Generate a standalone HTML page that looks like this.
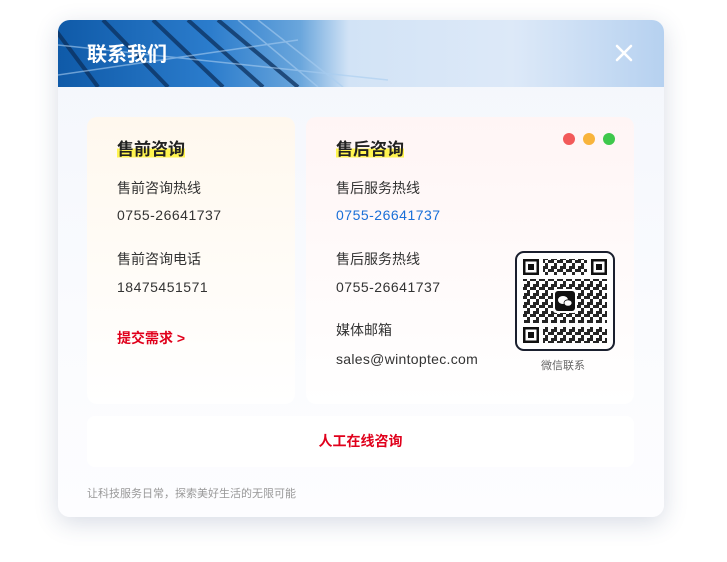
<!DOCTYPE html><html><head><meta charset="utf-8"><style>
*{margin:0;padding:0;box-sizing:border-box}
body{width:727px;height:562px;background:#fff;font-family:"Liberation Sans","Noto Sans CJK SC",sans-serif;position:relative;overflow:hidden}
.dlg{position:absolute;left:58px;top:20px;width:606px;height:497px;border-radius:12px;background:linear-gradient(180deg,#f3f6fc,#fafbfe 60%,#fdfdff);box-shadow:0 6px 24px rgba(40,60,110,.18);overflow:hidden}
.hd{position:absolute;left:0;top:0;width:606px;height:67px;background:linear-gradient(90deg,#0f5aa8 0%,#2b7ccc 25%,#6aa6dc 40%,#d2e3f6 48%,#dde9f8 75%,#b6d1f0 100%);overflow:hidden}
.hd h1{position:absolute;left:29px;top:18px;color:#fff;font-size:20px;font-weight:bold}
.x{position:absolute;left:555px;top:22px;width:22px;height:22px}
.card{position:absolute;top:97px;height:287px;border-radius:10px}
.l{left:29px;width:208px;background:linear-gradient(180deg,#fff8ee,#fff)}
.r{left:248px;width:328px;background:linear-gradient(180deg,#fff5f5,#fff)}
.t{position:absolute;font-size:17px;font-weight:bold;color:#222;background:linear-gradient(180deg,transparent 55%,#fff44f 55%,#fff44f 90%,transparent 90%)}
.s{position:absolute;font-size:14px;color:#333}
.n{letter-spacing:.5px}
.dot{position:absolute;top:16px;width:12px;height:12px;border-radius:50%}
.btn{position:absolute;left:29px;top:396px;width:547px;height:51px;border-radius:8px;background:#fff;color:#e0001b;font-weight:bold;font-size:14px;text-align:center;line-height:51px}
.ft{position:absolute;left:29px;top:465px;font-size:11px;color:#999}
</style></head><body>
<div class="dlg">
<div class="hd">
<svg width="330" height="67" style="position:absolute;left:0;top:0">
<g stroke="#0b2f5c" stroke-width="4" opacity=".75"><line x1="-10" y1="0" x2="40" y2="67"/><line x1="45" y1="0" x2="110" y2="67"/><line x1="95" y1="0" x2="165" y2="67"/><line x1="130" y1="0" x2="205" y2="67"/><line x1="160" y1="0" x2="240" y2="67"/></g>
<g stroke="#a9cdf0" stroke-width="1.5" opacity=".6"><line x1="0" y1="25" x2="330" y2="60"/><line x1="0" y1="55" x2="240" y2="20"/><line x1="180" y1="0" x2="260" y2="67"/><line x1="200" y1="0" x2="285" y2="67"/></g>
</svg>
<h1>联系我们</h1>
<svg class="x" viewBox="0 0 22 22"><path d="M4 4L18 18M18 4L4 18" stroke="#fff" stroke-width="2.6" stroke-linecap="round"/></svg>
</div>
<div class="card l">
<div class="t" style="left:30px;top:18px">售前咨询</div>
<div class="s" style="left:30px;top:61px">售前咨询热线</div>
<div class="s n" style="left:30px;top:90px">0755-26641737</div>
<div class="s" style="left:30px;top:132px">售前咨询电话</div>
<div class="s n" style="left:30px;top:162px">18475451571</div>
<div class="s" style="left:30px;top:211px;color:#e0001b;font-weight:bold">提交需求 &gt;</div>
</div>
<div class="card r">
<div class="t" style="left:30px;top:18px">售后咨询</div>
<div class="dot" style="left:257px;background:#f25a5a"></div>
<div class="dot" style="left:277px;background:#f8b43c"></div>
<div class="dot" style="left:297px;background:#3ec84c"></div>
<div class="s" style="left:30px;top:61px">售后服务热线</div>
<div class="s n" style="left:30px;top:90px;color:#1a6fd8">0755-26641737</div>
<div class="s" style="left:30px;top:132px">售后服务热线</div>
<div class="s n" style="left:30px;top:162px">0755-26641737</div>
<div class="s" style="left:30px;top:203px">媒体邮箱</div>
<div class="s" style="left:30px;top:234px;letter-spacing:.3px">sales@wintoptec.com</div>
<svg style="position:absolute;left:209px;top:134px" width="100" height="100" viewBox="0 0 100 100">
<defs><pattern id="p" width="9" height="9" patternUnits="userSpaceOnUse"><rect width="3" height="3"/><rect x="6" y="0" width="3" height="3"/><rect x="3" y="3" width="3" height="3"/><rect x="0" y="6" width="6" height="3"/></pattern></defs>
<rect x="1" y="1" width="98" height="98" rx="8" fill="#fff" stroke="#1a1f2e" stroke-width="2"/>
<g fill="#111"><rect x="8" y="8" width="16" height="16"/><rect x="76" y="8" width="16" height="16"/><rect x="8" y="76" width="16" height="16"/></g>
<g fill="#fff"><rect x="10.5" y="10.5" width="11" height="11"/><rect x="78.5" y="10.5" width="11" height="11"/><rect x="10.5" y="78.5" width="11" height="11"/></g>
<g fill="#111"><rect x="13" y="13" width="6" height="6"/><rect x="81" y="13" width="6" height="6"/><rect x="13" y="81" width="6" height="6"/></g>
<g opacity=".85">
<rect x="28" y="8" width="44" height="16" fill="url(#p)"/>
<rect x="8" y="28" width="84" height="44" fill="url(#p)"/>
<rect x="28" y="76" width="64" height="16" fill="url(#p)"/>
</g>
<rect x="38" y="38" width="24" height="24" rx="3" fill="#fff"/>
<rect x="40" y="40" width="20" height="20" rx="3" fill="#111"/>
<ellipse cx="48" cy="49" rx="5" ry="4" fill="#fff"/><ellipse cx="53" cy="52" rx="4" ry="3.2" fill="#fff" stroke="#111" stroke-width=".8"/>
</svg>
<div class="s" style="left:235px;top:240px;font-size:11px;color:#666">微信联系</div>
</div>
<div class="btn">人工在线咨询</div>
<div class="ft">让科技服务日常，探索美好生活的无限可能</div>
</div>
</body></html>
